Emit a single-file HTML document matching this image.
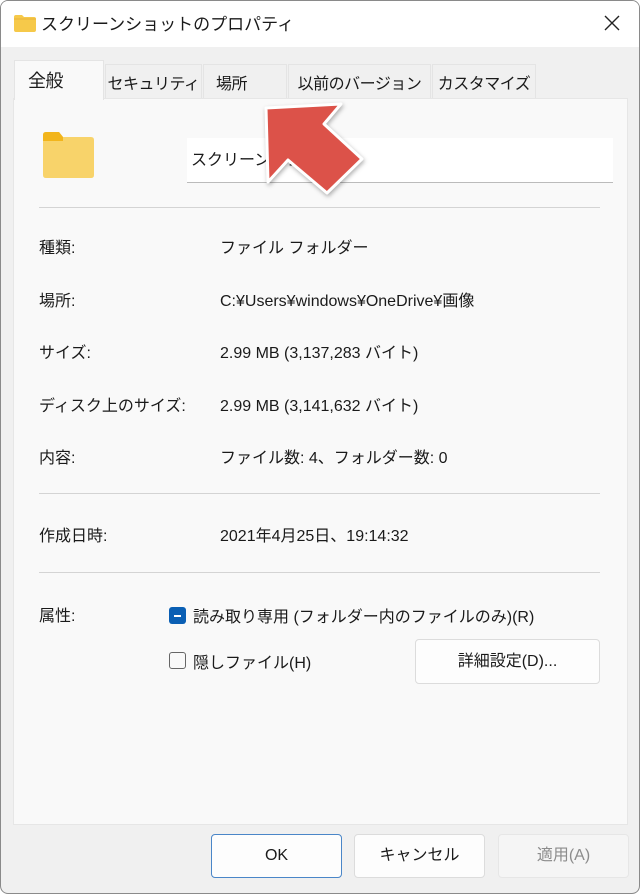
<!DOCTYPE html>
<html><head><meta charset="utf-8"><style>
*{margin:0;padding:0;box-sizing:border-box}
body{width:640px;height:894px;background:#fff;font-family:"Liberation Sans","Noto Sans CJK JP",sans-serif;color:#1a1a1a;font-size:16px;position:relative;overflow:hidden}
.win{position:absolute;left:0;top:0;width:640px;height:894px;border:1px solid #8a8a8a;border-radius:8px;background:#f0f0f0;overflow:hidden}
.title{position:absolute;left:0;top:0;width:638px;height:46px;background:#fff}
.t{position:absolute;white-space:nowrap}
.tab{position:absolute;top:63px;height:34px;background:#f0f0f0;border:1px solid #e4e4e4;border-bottom:none;font-size:16px;padding-top:5px;text-align:center;white-space:nowrap;letter-spacing:-0.5px}
.panel{position:absolute;left:12px;top:97px;width:615px;height:727px;background:#f9f9f9;border:1px solid #e6e6e6}
.hr{position:absolute;left:38px;width:561px;height:1px;background:#d4d4d4}
.btn{position:absolute;top:833px;width:131px;height:44px;background:#fdfdfd;border:1px solid #dcdcdc;border-radius:4px;text-align:center;line-height:42px;font-size:16px}
</style></head><body>
<div class="win">
<div class="title">
<svg style="position:absolute;left:13px;top:14px" width="22" height="17"><path d="M0 2 Q0 0 2 0 H8 L10 2 H20 Q22 2 22 4 V15 Q22 17 20 17 H2 Q0 17 0 15Z" fill="#f6c94a"/><path d="M0 4 H22" stroke="#e9b43a"/></svg>
<div class="t" style="left:40px;top:9px;font-size:17px">スクリーンショットのプロパティ</div>
<svg style="position:absolute;left:603px;top:14px" width="16" height="16"><path d="M1 1L15 15M15 1L1 15" stroke="#222" stroke-width="1.4"/></svg>
</div>
<div class="panel"></div>
<div class="tab" style="left:13px;top:59px;width:90px;height:40px;background:#f9f9f9;font-size:18px;padding-top:6px;text-align:left;padding-left:13px">全般</div>
<div class="tab" style="left:104px;width:97px">セキュリティ</div>
<div class="tab" style="left:202px;width:84px;text-align:left;padding-left:12px">場所</div>
<div class="tab" style="left:287px;width:143px">以前のバージョン</div>
<div class="tab" style="left:431px;width:104px">カスタマイズ</div>
<svg style="position:absolute;left:40px;top:130px" width="54" height="48"><path d="M2 4 Q2 1 5 1 H18 L22 6 H50 Q53 6 53 9 V44 Q53 47 50 47 H5 Q2 47 2 44Z" fill="#f8d36a"/><path d="M2 4 Q2 1 5 1 H18 L22 6 V10 H2Z" fill="#f2b51c"/></svg>
<div style="position:absolute;left:186px;top:137px;width:426px;height:45px;background:#fff;border-bottom:1px solid #bbb"></div>
<div class="t" style="left:190px;top:145px">スクリーンショット</div>
<div class="hr" style="top:206px"></div>
<div class="t" style="left:38px;top:233px">種類:</div><div class="t" style="left:219px;top:233px">ファイル フォルダー</div>
<div class="t" style="left:38px;top:286px">場所:</div><div class="t" style="left:219px;top:286px">C:¥Users¥windows¥OneDrive¥画像</div>
<div class="t" style="left:38px;top:338px">サイズ:</div><div class="t" style="left:219px;top:338px">2.99 MB (3,137,283 バイト)</div>
<div class="t" style="left:38px;top:391px">ディスク上のサイズ:</div><div class="t" style="left:219px;top:391px">2.99 MB (3,141,632 バイト)</div>
<div class="t" style="left:38px;top:443px">内容:</div><div class="t" style="left:219px;top:443px">ファイル数: 4、フォルダー数: 0</div>
<div class="hr" style="top:492px"></div>
<div class="t" style="left:38px;top:521px">作成日時:</div><div class="t" style="left:219px;top:521px">2021年4月25日、19:14:32</div>
<div class="hr" style="top:571px"></div>
<div class="t" style="left:38px;top:601px">属性:</div>
<div style="position:absolute;left:168px;top:606px;width:17px;height:17px;background:#0a5fb4;border-radius:3px"><div style="position:absolute;left:5px;top:8px;width:7px;height:1.5px;background:#fff"></div></div>
<div class="t" style="left:192px;top:602px">読み取り専用 (フォルダー内のファイルのみ)(R)</div>
<div style="position:absolute;left:168px;top:651px;width:17px;height:17px;border:1px solid #666;border-radius:3px;background:#f9f9f9"></div>
<div class="t" style="left:192px;top:648px">隠しファイル(H)</div>
<div style="position:absolute;left:414px;top:638px;width:185px;height:45px;background:#fdfdfd;border:1px solid #dcdcdc;border-radius:4px;text-align:center;line-height:44px">詳細設定(D)...</div>
<div class="btn" style="left:210px;border-color:#4a86c8">OK</div>
<div class="btn" style="left:353px">キャンセル</div>
<div class="btn" style="left:497px;background:#f5f5f5;border-color:#e6e6e6;color:#8c8c8c">適用(A)</div>
</div>
<svg style="position:absolute;left:0;top:0" width="640" height="894"><polygon points="266,108 341,104 324,124 362,159 327,193 288,160 268,182" fill="#dc5249" stroke="#fff" stroke-width="3" stroke-linejoin="round" style="filter:drop-shadow(1px 2px 2px rgba(0,0,0,.3))"/></svg>
</body></html>
